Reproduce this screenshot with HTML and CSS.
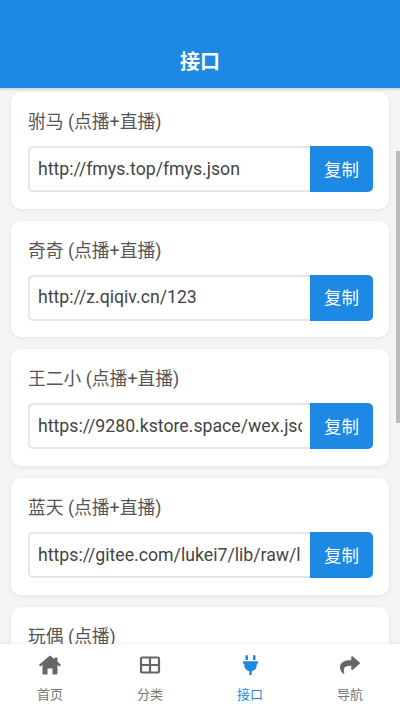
FILE: index.html
```html
<!DOCTYPE html>
<html>
<head>
    <meta charset="UTF-8">
    <title>接口</title>
    <link rel="stylesheet" href="styles.css">
</head>
<body>
    <div class="app">
        <div class="header">接口</div>
        <div class="main">
            <div class="list">
                <div class="card">
                    <div class="name">驸马 (点播+直播)</div>
                    <div class="row">
                        <input class="url" type="text" readonly value="http://fmys.top/fmys.json">
                        <a href="javascript:;" class="copy">复制</a>
                    </div>
                </div>
                <div class="card">
                    <div class="name">奇奇 (点播+直播)</div>
                    <div class="row">
                        <input class="url" type="text" readonly value="http://z.qiqiv.cn/123">
                        <a href="javascript:;" class="copy">复制</a>
                    </div>
                </div>
                <div class="card">
                    <div class="name">王二小 (点播+直播)</div>
                    <div class="row">
                        <input class="url" type="text" readonly value="https://9280.kstore.space/wex.json">
                        <a href="javascript:;" class="copy">复制</a>
                    </div>
                </div>
                <div class="card">
                    <div class="name">蓝天 (点播+直播)</div>
                    <div class="row">
                        <input class="url" type="text" readonly value="https://gitee.com/lukei7/lib/raw/lib/tv.json">
                        <a href="javascript:;" class="copy">复制</a>
                    </div>
                </div>
                <div class="card">
                    <div class="name">玩偶 (点播)</div>
                </div>
            </div>
            <div class="scrollbar"></div>
        </div>
        <div class="nav">
            <a href="javascript:;" class="nav-item">
                <svg class="icon" viewBox="0 0 22 20"><path d="M11 .5L.6 9.3Q-.2 10 .5 10.8 1.2 11.4 2 11L3.5 10V18.5Q3.5 19.5 4.5 19.5H8.5V13.5H13.5V19.5H17.5Q18.5 19.5 18.5 18.5V10L20 11Q20.8 11.4 21.5 10.8 22.2 10 21.4 9.3L18.5 6.8V2.5H15.5V4.2Z"/></svg>
                <span>首页</span>
            </a>
            <a href="javascript:;" class="nav-item">
                <svg class="icon" viewBox="0 0 22 20"><path class="grid" d="M3 2.5H19Q20 2.5 20 3.5V16.5Q20 17.5 19 17.5H3Q2 17.5 2 16.5V3.5Q2 2.5 3 2.5ZM2 10H20M11 2.5V17.5"/></svg>
                <span>分类</span>
            </a>
            <a href="javascript:;" class="nav-item active">
                <svg class="icon" viewBox="0 0 384 512"><path d="M320,32a32,32,0,0,0-64,0v96h64Zm48,128H16A16,16,0,0,0,0,176v32a16,16,0,0,0,16,16H32v32A160.07,160.07,0,0,0,160,412.8V512h64V412.8A160.07,160.07,0,0,0,352,256V224h16a16,16,0,0,0,16-16V176A16,16,0,0,0,368,160ZM128,32a32,32,0,0,0-64,0v96h64Z"/></svg>
                <span>接口</span>
            </a>
            <a href="javascript:;" class="nav-item">
                <svg class="icon" viewBox="0 0 512 512"><path d="M503.691 189.836L327.687 37.851C312.281 24.546 288 35.347 288 56.015v80.053C127.371 137.907 0 170.1 0 322.326c0 61.441 39.581 122.309 83.333 154.132 13.653 9.931 33.111-2.533 28.077-18.631C66.066 312.814 132.917 274.316 288 272.085V360c0 20.7 24.3 31.453 39.687 18.164l176.004-152c11.071-9.562 11.086-26.753 0-36.328z"/></svg>
                <span>导航</span>
            </a>
        </div>
    </div>
</body>
</html>
```

FILE: styles.css
```css
* {
    margin: 0;
    padding: 0;
    box-sizing: border-box;
}
body {
    font-family: Roboto, "Noto Sans CJK SC", sans-serif;
    background-color: #f5f5f5;
}
.app {
    width: 400px;
    height: 710px;
    display: flex;
    flex-direction: column;
    overflow: hidden;
}
.header {
    height: 88px;
    flex-shrink: 0;
    padding-top: 48px;
    line-height: 28px;
    text-align: center;
    font-size: 20px;
    font-weight: 700;
    color: #fff;
    background-color: #1e88e5;
    box-shadow: 0 1px 3px rgba(0, 0, 0, 0.2);
    position: relative;
    z-index: 2;
}
.main {
    flex: 1;
    min-height: 0;
    overflow: hidden;
    position: relative;
}
.list {
    display: flex;
    flex-direction: column;
    gap: 12px;
    padding: 4px 11px 0;
}
.card {
    height: 116.7px;
    flex-shrink: 0;
    padding: 18px 16px 0 17px;
    background-color: #fff;
    border-radius: 10px;
    box-shadow: 0 1px 5px rgba(0, 0, 0, 0.08);
}
.name {
    font-size: 17.8px;
    line-height: 24px;
    color: #555;
}
.row {
    display: flex;
    height: 46px;
    margin-top: 12px;
}
.url {
    flex: 1;
    min-width: 0;
    padding: 0 8px 1px;
    font-family: inherit;
    font-size: 17.7px;
    color: #444;
    background-color: #fff;
    border: 2px solid #e6e6e6;
    border-right: 0;
    border-radius: 5px 0 0 5px;
    outline: none;
}
.copy {
    width: 63px;
    flex-shrink: 0;
    display: flex;
    align-items: center;
    justify-content: center;
    padding-bottom: 2px;
    font-size: 17.5px;
    color: #fff;
    text-decoration: none;
    background-color: #1e88e5;
    border-radius: 0 5px 5px 0;
}
.scrollbar {
    position: absolute;
    top: 63px;
    right: 0;
    width: 4px;
    height: 272px;
    background-color: #bbb;
}
.nav {
    height: 66px;
    flex-shrink: 0;
    display: flex;
    background-color: #fff;
    box-shadow: 0 -1px 2px rgba(0, 0, 0, 0.06);
    position: relative;
    z-index: 2;
}
.nav-item {
    flex: 1;
    display: flex;
    flex-direction: column;
    align-items: center;
    padding-top: 11px;
    font-size: 13px;
    color: #777;
    text-decoration: none;
}
.nav-item .icon {
    height: 20px;
    fill: #666;
}
.nav-item .grid {
    fill: none;
    stroke: #666;
    stroke-width: 2.2;
}
.nav-item span {
    margin-top: 11px;
    line-height: 18px;
}
.nav-item.active {
    color: #1e88e5;
}
.nav-item.active .icon {
    fill: #1e88e5;
}
```
